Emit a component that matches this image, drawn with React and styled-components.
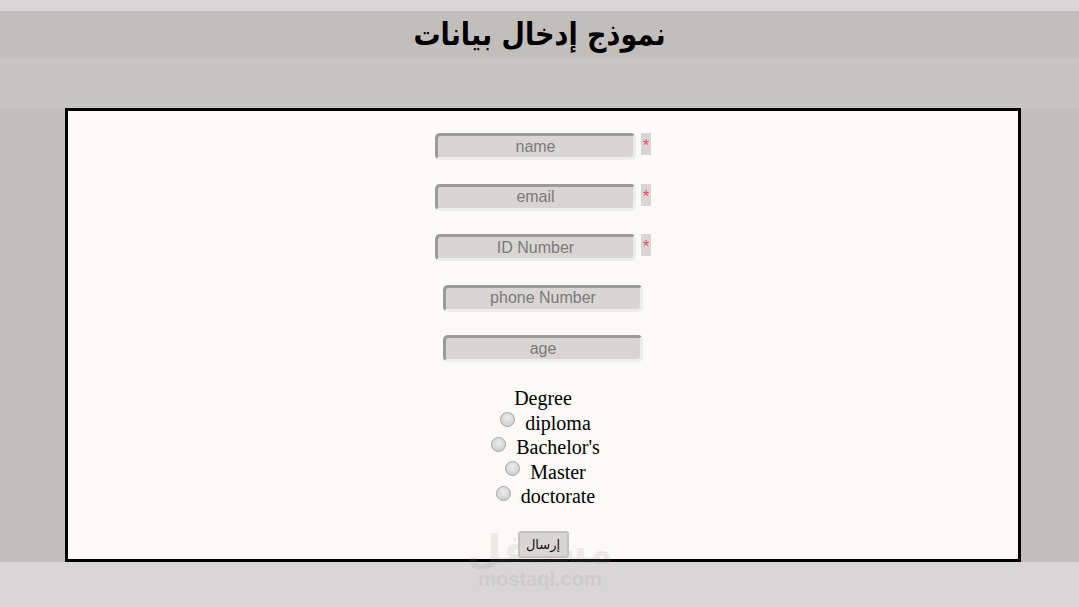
import React from "react";
import styled, { createGlobalStyle } from "styled-components";

const Global = createGlobalStyle`
  html, body { margin: 0; padding: 0; }
  body {
    background: #d8d6d6;
    font-family: "Liberation Serif", "Times New Roman", serif;
    overflow: hidden;
  }
`;

const Page = styled.div`
  position: relative;
  width: 1079px;
  height: 607px;
  display: flex;
  flex-direction: column;
`;

const TopStrip = styled.div`
  height: 11px;
  background: #d8d6d6;
`;

const Header = styled.header`
  height: 47px;
  background: #c2bebc;
  display: flex;
  align-items: center;
  justify-content: center;
`;

const Title = styled.h1`
  margin: 0;
  font-family: "DejaVu Sans", sans-serif;
  font-weight: bold;
  font-size: 27px;
  color: #000;
  direction: rtl;
  line-height: 1;
  transform: scaleY(1.15);
`;

const Band = styled.div`
  height: 50px;
  background: #c8c4c3;
`;

const Main = styled.main`
  height: 454px;
  background: #c2bebc;
  padding-left: 65px;
`;

const FormBox = styled.form`
  box-sizing: border-box;
  width: 956px;
  height: 454px;
  border: 3px solid #000;
  background: #fcfaf6;
  display: flex;
  flex-direction: column;
  align-items: center;
  padding-top: 22px;
`;

const Fields = styled.div`
  display: flex;
  flex-direction: column;
  align-items: center;
  gap: 23.5px;
`;

const FieldRow = styled.div`
  display: flex;
  align-items: flex-start;
  gap: 5px;
`;

const Input = styled.input`
  box-sizing: border-box;
  width: ${(p) => (p.$wide ? 201 : 200)}px;
  height: 27px;
  margin: 0;
  padding: 0;
  border-style: solid;
  border-width: 3px;
  border-color: #9b9b9b #eceeee #eceeee #9b9b9b;
  border-radius: 5px;
  background: #d8d5d2;
  font-family: "Liberation Sans", Arial, sans-serif;
  font-size: 16px;
  text-align: center;
  color: #555;
  outline: none;
  &::placeholder { color: #7b7b7b; }
`;

const Star = styled.span`
  display: block;
  box-sizing: border-box;
  width: 10px;
  height: 22px;
  padding-top: 4px;
  background: #d8d5d2;
  color: #ef4b73;
  font-family: "Liberation Sans", Arial, sans-serif;
  font-size: 17px;
  line-height: 18px;
  text-align: center;
`;

const Degree = styled.fieldset`
  border: none;
  margin: 24px 0 0;
  padding: 0;
  display: flex;
  flex-direction: column;
  align-items: center;
  font-size: 20px;
  line-height: 24.5px;
  color: #000;
`;

const Legend = styled.div``;

const RadioLabel = styled.label`
  display: flex;
  align-items: center;
  gap: 10px;
  padding-left: 5px;
`;

const Radio = styled.input.attrs({ type: "radio" })`
  appearance: none;
  margin: -6px 0 0 0;
  width: 15px;
  height: 15px;
  border-radius: 50%;
  border: 1px solid #a4a4a4;
  background: radial-gradient(circle at 50% 35%, #ececec 0%, #d6d6d6 60%, #c8c8c8 100%);
  box-sizing: border-box;
`;

const Submit = styled.button`
  margin-top: 22px;
  width: 51px;
  height: 27px;
  box-sizing: border-box;
  border: 2px solid #c4c1be;
  border-radius: 3px;
  background: #d8d5d2;
  font-family: "DejaVu Sans", sans-serif;
  font-size: 13px;
  color: #111;
  padding: 0;
  direction: rtl;
  position: relative;
  z-index: 1;
`;

const Bottom = styled.div`
  flex: 1;
  background: #d8d6d6;
`;

const Watermark = styled.div`
  position: absolute;
  left: 470px;
  top: 528px;
  width: 140px;
  display: flex;
  flex-direction: column;
  align-items: center;
  pointer-events: none;
  color: rgba(150, 146, 146, 0.18);
  font-family: "DejaVu Sans", sans-serif;
  font-weight: bold;
  z-index: 0;
`;

const WmLogo = styled.div`
  font-size: 40px;
  line-height: 42px;
  direction: rtl;
`;

const WmUrl = styled.div`
  font-family: "Liberation Sans", Arial, sans-serif;
  font-size: 20px;
  line-height: 22px;
  margin-top: -2px;
`;

const fields = [
  { ph: "name", req: true },
  { ph: "email", req: true },
  { ph: "ID Number", req: true },
  { ph: "phone Number", req: false },
  { ph: "age", req: false },
];

const degrees = ["diploma", "Bachelor's", "Master", "doctorate"];

export default function App() {
  return (
    <>
      <Global />
      <Page>
        <TopStrip />
        <Header>
          <Title>نموذج إدخال بيانات</Title>
        </Header>
        <Band />
        <Main>
          <FormBox onSubmit={(e) => e.preventDefault()}>
            <Fields>
              {fields.map((f) => (
                <FieldRow key={f.ph}>
                  <Input $wide={f.req} placeholder={f.ph} />
                  {f.req && <Star>*</Star>}
                </FieldRow>
              ))}
            </Fields>
            <Degree>
              <Legend>Degree</Legend>
              {degrees.map((d) => (
                <RadioLabel key={d}>
                  <Radio name="degree" />
                  {d}
                </RadioLabel>
              ))}
            </Degree>
            <Submit type="submit">إرسال</Submit>
          </FormBox>
        </Main>
        <Bottom />
        <Watermark>
          <WmLogo>مستقل</WmLogo>
          <WmUrl>mostaql.com</WmUrl>
        </Watermark>
      </Page>
    </>
  );
}
